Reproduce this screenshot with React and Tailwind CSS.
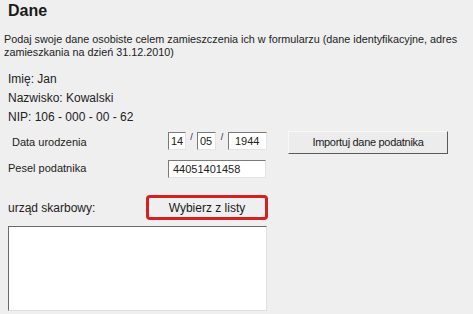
import React from 'react';

const sunken = 'border border-t-[#7a7a7a] border-l-[#7a7a7a] border-b-[#e4e4e4] border-r-[#e4e4e4] bg-white';

const App = () => {
  return (
    <div className="w-[473px] h-[314px] overflow-hidden bg-[#efefef] text-[#222] font-['Liberation_Sans',Arial,sans-serif]">
      <h1 className="pl-[8px] pt-[1px] text-[16px] leading-[19px] font-bold text-[#1a1a1a]">Dane</h1>
      <p className="mt-[13px] pl-[4px] text-[10.8px] leading-[13px] whitespace-nowrap">
        Podaj swoje dane osobiste celem zamieszczenia ich w formularzu (dane identyfikacyjne, adres
        <br />
        zamieszkania na dzień 31.12.2010)
      </p>
      <div className="pl-[8px] mt-[13px] flex flex-col gap-[5px] text-[12px] leading-[14px]">
        <div>Imię: Jan</div>
        <div>Nazwisko: Kowalski</div>
        <div>NIP: 106 - 000 - 00 - 62</div>
      </div>
      <div className="mt-[8px] flex items-start text-[11px]">
        <div className="w-[168px] pl-[12px] pt-[3px] leading-[14px]">Data urodzenia</div>
        <div className="flex items-start w-[120px]">
          <div className={`${sunken} w-[18px] h-[18px] pl-[2px] leading-[16px]`}>14</div>
          <span className="w-[11px] text-center text-[9px] leading-[11px]">/</span>
          <div className={`${sunken} w-[19px] h-[18px] pl-[2px] leading-[16px]`}>05</div>
          <span className="w-[12px] text-center text-[9px] leading-[11px]">/</span>
          <div className={`${sunken} w-[39px] h-[18px] pl-[6px] leading-[16px]`}>1944</div>
        </div>
        <button className="mt-[-1px] w-[160px] h-[23px] bg-[#ececec] border border-t-[#f8f8f8] border-l-[#f8f8f8] border-b-[#5a5a5a] border-r-[#5a5a5a] text-[11px] tracking-[-0.3px] text-[#1a1a1a]">
          Importuj dane podatnika
        </button>
      </div>
      <div className="mt-[6px] flex items-start text-[11px]">
        <div className="w-[168px] pl-[8px] pt-[1px] leading-[14px]">Pesel podatnika</div>
        <div className={`${sunken} w-[98px] h-[18px] pl-[4px] leading-[16px]`}>44051401458</div>
      </div>
      <div className="mt-[17px] flex items-center text-[12px]">
        <div className="w-[146px] pl-[8px] leading-[14px]">urząd skarbowy:</div>
        <div className="w-[122px] h-[25px] rounded-[4px] border-[3px] border-[#d42020] bg-[#efefef] flex items-center justify-center text-[#1a1a1a]">
          Wybierz z listy
        </div>
      </div>
      <div className="ml-[8px] mt-[6px] w-[259px] h-[85px] bg-white border border-t-[#6a6a6a] border-l-[#6a6a6a] border-b-[#e0e0e0] border-r-[#e0e0e0]" />
    </div>
  );
};

export default App;
